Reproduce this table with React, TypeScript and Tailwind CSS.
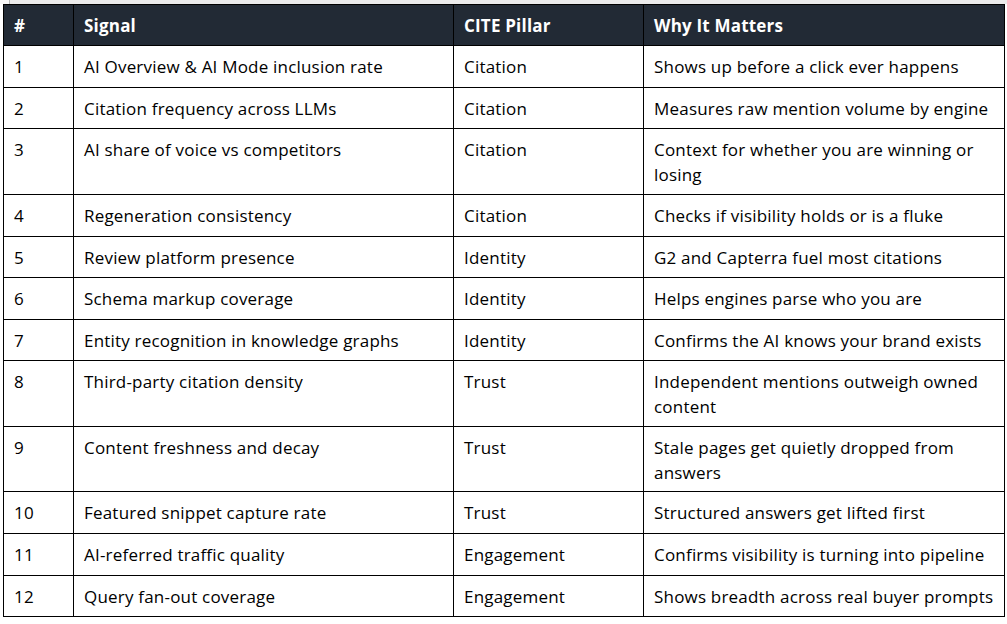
import React from "react";

type Row = { n: string; h: string; signal: string; pillar: string; why: React.ReactNode };

const rows: Row[] = [
  { n: "1", h: "h-[42px]", signal: "AI Overview & AI Mode inclusion rate", pillar: "Citation", why: "Shows up before a click ever happens" },
  { n: "2", h: "h-[41px]", signal: "Citation frequency across LLMs", pillar: "Citation", why: "Measures raw mention volume by engine" },
  { n: "3", h: "h-[66px]", signal: "AI share of voice vs competitors", pillar: "Citation", why: <>Context for whether you are winning or<br />losing</> },
  { n: "4", h: "h-[42px]", signal: "Regeneration consistency", pillar: "Citation", why: "Checks if visibility holds or is a fluke" },
  { n: "5", h: "h-[41px]", signal: "Review platform presence", pillar: "Identity", why: "G2 and Capterra fuel most citations" },
  { n: "6", h: "h-[42px]", signal: "Schema markup coverage", pillar: "Identity", why: "Helps engines parse who you are" },
  { n: "7", h: "h-[41px]", signal: "Entity recognition in knowledge graphs", pillar: "Identity", why: "Confirms the AI knows your brand exists" },
  { n: "8", h: "h-[66px]", signal: "Third-party citation density", pillar: "Trust", why: <>Independent mentions outweigh owned<br />content</> },
  { n: "9", h: "h-[65px]", signal: "Content freshness and decay", pillar: "Trust", why: <>Stale pages get quietly dropped from<br />answers</> },
  { n: "10", h: "h-[42px]", signal: "Featured snippet capture rate", pillar: "Trust", why: "Structured answers get lifted first" },
  { n: "11", h: "h-[42px]", signal: "AI-referred traffic quality", pillar: "Engagement", why: "Confirms visibility is turning into pipeline" },
  { n: "12", h: "h-[41px]", signal: "Query fan-out coverage", pillar: "Engagement", why: "Shows breadth across real buyer prompts" },
];

const cell = "border border-black align-top pl-[10px] pr-[4px] pt-[8px] pb-0 leading-[25px] whitespace-nowrap";
const head = "border border-black align-top pl-[10px] pr-[4px] pt-[8px] pb-0 leading-[25px] text-left font-bold text-white whitespace-nowrap";

export default function App() {
  return (
    <div
      className="w-[1007px] h-[624px] bg-white overflow-hidden"
      style={{ fontFamily: '"Open Sans", "Noto Sans", sans-serif' }}
    >
      <div className="flex h-[4px] bg-[#ebebeb]">
        <div className="w-[10px] h-[4px] bg-[#f7f7f7] border-r border-[#b5b5b5]" />
      </div>
      <div className="pl-[3px]">
        <table className="border-collapse table-fixed w-[1001px] text-[17px] tracking-[0.2px] text-black">
          <colgroup>
            <col className="w-[70px]" />
            <col className="w-[380px]" />
            <col className="w-[190px]" />
            <col className="w-[361px]" />
          </colgroup>
          <thead>
            <tr className="bg-[#222a35] h-[41px]">
              <th className={head}>#</th>
              <th className={head}>Signal</th>
              <th className={head}>CITE Pillar</th>
              <th className={head}>Why It Matters</th>
            </tr>
          </thead>
          <tbody>
            {rows.map((r) => (
              <tr key={r.n} className={r.h}>
                <td className={cell}>{r.n}</td>
                <td className={cell}>{r.signal}</td>
                <td className={cell}>{r.pillar}</td>
                <td className={cell}>{r.why}</td>
              </tr>
            ))}
          </tbody>
        </table>
      </div>
    </div>
  );
}
